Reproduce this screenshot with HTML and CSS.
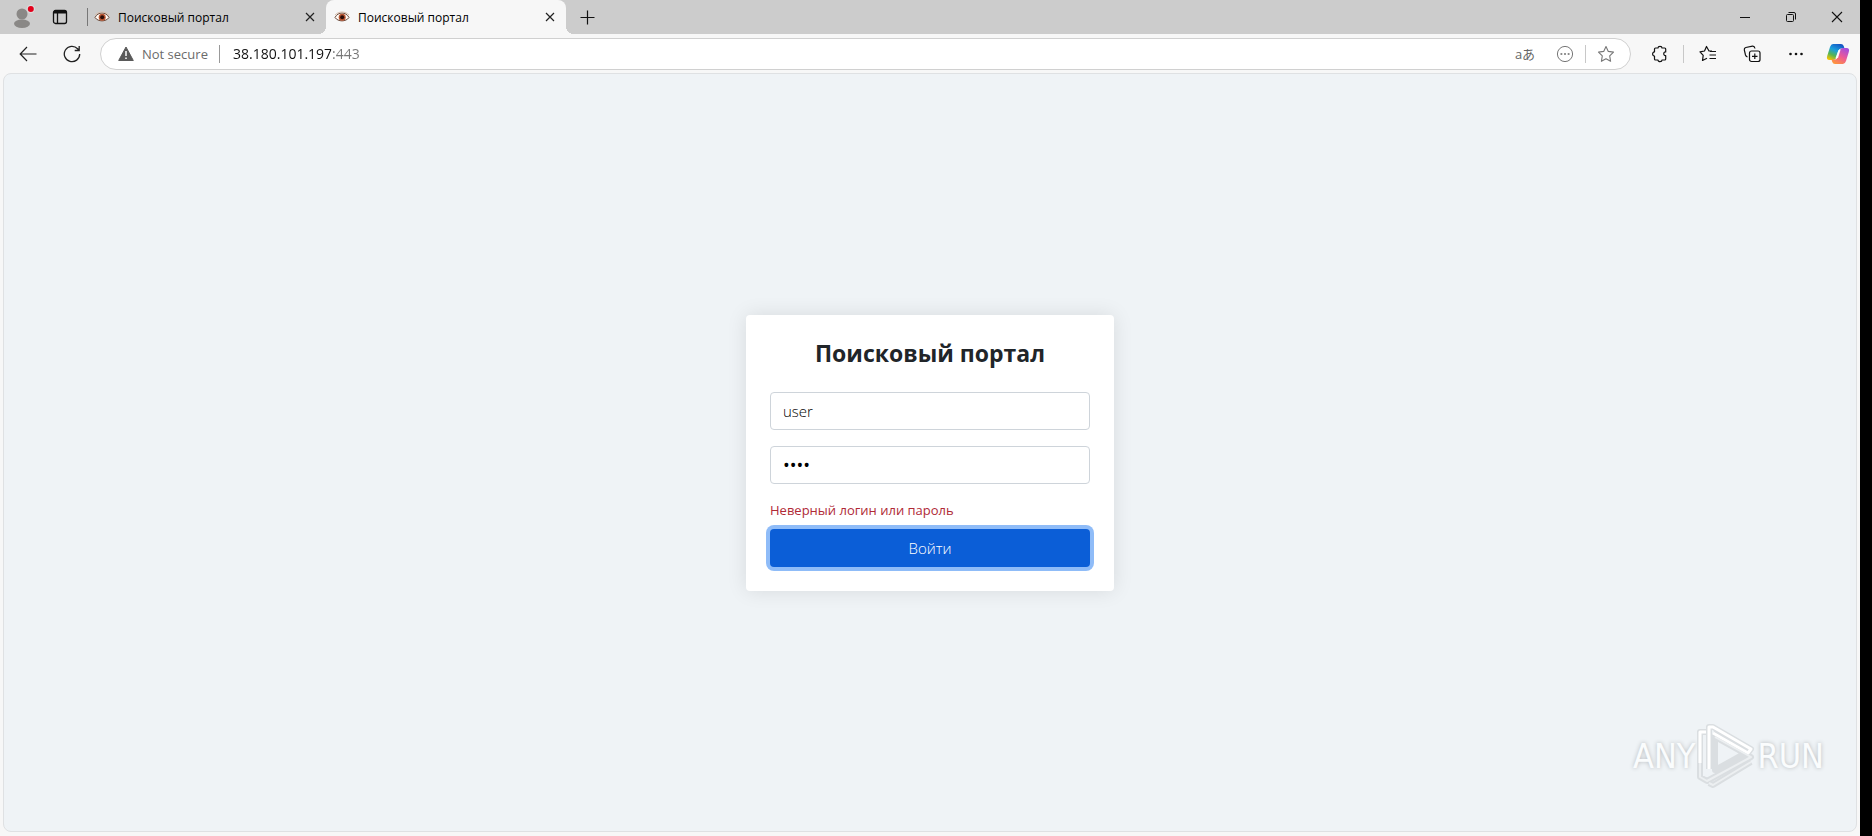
FILE: index.html
```html
<!DOCTYPE html>
<html lang="ru">
<head>
  <meta charset="UTF-8">
  <meta name="viewport" content="width=device-width, initial-scale=1">
  <title>Поисковый портал</title>
  <link rel="stylesheet" href="styles.css">
</head>
<body>

  <!-- shared icons -->
  <svg class="sprite" aria-hidden="true">
    <symbol id="eye" viewBox="0 0 16 16">
      <path d="M1 8.500C4 2.500 12 2.500 15 8.500C12 13 4 13 1 8.500Z" fill="#fffaf5" stroke="#6b4a3a"/>
      <path d="M1 6C4.500 2 11.500 2 15 6" fill="none" stroke="#d8bfae"/>
      <circle cx="8.200" cy="8.200" r="3.500" fill="#b8532f"/>
      <circle cx="8.200" cy="8.200" r="2" fill="#2a0d08"/>
    </symbol>
    <symbol id="cross" viewBox="0 0 16 16">
      <path d="M4 4L12 12M12 4L4 12" fill="none" stroke="#222" stroke-width="1.2"/>
    </symbol>
    <symbol id="star" viewBox="0 0 18 18">
      <path d="M9 1.500L11.300 6.400L16.500 7.100L12.700 10.900L13.600 16.300L9 13.700L4.400 16.300L5.300 10.900L1.500 7.100L6.700 6.400Z" fill="none" stroke="#777" stroke-width="1.1" stroke-linejoin="round"/>
    </symbol>
  </svg>

  <div class="browser">

    <!-- tab strip -->
    <header class="titlebar">
      <button class="profile" aria-label="Profile">
        <svg width="28" height="30" viewBox="0 0 28 30">
          <circle cx="14" cy="12" r="5.500" fill="#8a8886"/>
          <ellipse cx="14" cy="21.800" rx="8" ry="4.200" fill="#8a8886"/>
          <circle cx="22.800" cy="7" r="4.200" fill="#dcdcdc"/>
          <circle cx="22.800" cy="7" r="3" fill="#e3001b"/>
        </svg>
      </button>
      <button class="workspace" aria-label="Tab actions">
        <svg width="16" height="16" viewBox="0 0 16 16" fill="none" stroke="#111" stroke-width="1.3">
          <rect x="1.500" y="1.500" width="13" height="13" rx="2"/>
          <path d="M1.500 3.300H14.500M5.500 4V14.500" />
          <path d="M2 3H14" stroke-width="3"/>
        </svg>
      </button>
      <span class="divider tab-divider"></span>
      <div class="tab">
        <svg class="favicon"><use href="#eye"/></svg>
        <span class="tab-title">Поисковый портал</span>
        <button class="tab-close" aria-label="Close tab"><svg width="16" height="16"><use href="#cross"/></svg></button>
      </div>
      <div class="tab active">
        <svg class="favicon"><use href="#eye"/></svg>
        <span class="tab-title">Поисковый портал</span>
        <button class="tab-close" aria-label="Close tab"><svg width="16" height="16"><use href="#cross"/></svg></button>
      </div>
      <button class="new-tab" aria-label="New tab">
        <svg width="16" height="16" viewBox="0 0 16 16"><path d="M8.500 1.500V15.500M1.500 8.500H15.500" stroke="#111" stroke-width="1.2"/></svg>
      </button>
      <div class="window-buttons">
        <button aria-label="Minimize"><svg width="12" height="12" viewBox="0 0 12 12"><path d="M1 6.500H11" stroke="#111"/></svg></button>
        <button aria-label="Restore">
          <svg width="12" height="12" viewBox="0 0 12 12" fill="none" stroke="#111">
            <rect x="1.500" y="3.500" width="7" height="7" rx="1"/>
            <path d="M3.500 1.500H9Q10.500 1.500 10.500 3V8.500"/>
          </svg>
        </button>
        <button aria-label="Close window"><svg width="12" height="12" viewBox="0 0 12 12"><path d="M1 1L11 11M11 1L1 11" stroke="#111" stroke-width="1.1"/></svg></button>
      </div>
    </header>

    <!-- address bar -->
    <nav class="toolbar">
      <button class="tool" aria-label="Back">
        <svg width="18" height="18" viewBox="0 0 18 18" fill="none" stroke="#222" stroke-width="1.2"><path d="M17.500 9H1.500M8 2L1.200 9L8 16"/></svg>
      </button>
      <button class="tool" aria-label="Refresh">
        <svg width="18" height="18" viewBox="0 0 18 18" fill="none" stroke="#222" stroke-width="1.3"><path d="M16.700 9A7.700 7.700 0 1 1 14.600 3.700L16 5.300M16.200 1V5.500H11.700"/></svg>
      </button>
      <div class="omnibox">
        <svg width="16" height="16" viewBox="0 0 16 16">
          <path d="M8 1L15.300 14.500H0.700Z" fill="#5a5a5a" stroke="#5a5a5a" stroke-linejoin="round"/>
          <path d="M8 5V10M8 11.500V13" stroke="#fff" stroke-width="1.500"/>
        </svg>
        <label class="security" for="url">Not secure</label>
        <span class="divider url-divider"></span>
        <input id="url" class="url" type="text" value="38.180.101.197:443" spellcheck="false">
        <button class="omni-btn translate" aria-label="Translate">aあ</button>
        <button class="omni-btn" aria-label="More">
          <svg width="18" height="18" viewBox="0 0 18 18"><circle cx="9" cy="9" r="7.600" fill="none" stroke="#777"/><path d="M4.500 9H6.300M8.100 9H9.900M11.700 9H13.500" stroke="#666" stroke-width="1.600"/></svg>
        </button>
        <span class="divider"></span>
        <button class="omni-btn" aria-label="Add to favorites"><svg width="18" height="18"><use href="#star"/></svg></button>
      </div>
      <button class="tool" aria-label="Extensions">
        <svg width="18" height="18" viewBox="0 0 18 18" fill="none" stroke="#111" stroke-width="1.200" stroke-linejoin="round">
          <path d="M4.500 3H7C7 .8 11 .8 11 3H13.700Q14.700 3 14.700 4V7C12.100 6.500 12.100 11 14.700 10.500V14Q14.700 15 13.700 15H11C11 17.200 7 17.200 7 15H4.500Q3.500 15 3.500 14V11C1 11.400 1 6.600 3.500 7V4Q3.500 3 4.500 3Z"/>
        </svg>
      </button>
      <span class="divider tool-divider"></span>
      <button class="tool" aria-label="Favorites">
        <svg width="18" height="18" viewBox="0 0 18 18" fill="none" stroke="#111" stroke-width="1.200" stroke-linejoin="round">
          <path d="M13 6H10L7.500 1.500L5.500 6L1 6.800L4.200 10.300L3.500 15.500L8 13.200M11 6.500H17M10.500 10H17M10.500 13.500H17"/>
        </svg>
      </button>
      <button class="tool" aria-label="Collections">
        <svg width="18" height="18" viewBox="0 0 18 18" fill="none" stroke="#111" stroke-width="1.200">
          <rect x="6.500" y="6" width="10.500" height="10.500" rx="2"/>
          <path d="M11.800 8.500V14M9 11.300H14.500M4.500 12Q3 11.500 2.500 10L1.300 5Q1 3 2.800 2.500L9.500 1.200Q11.500 1 12 3.500"/>
        </svg>
      </button>
      <button class="tool" aria-label="Settings and more">
        <svg width="18" height="18" viewBox="0 0 18 18" fill="#111"><circle cx="3.500" cy="9" r="1.300"/><circle cx="9" cy="9" r="1.300"/><circle cx="14.500" cy="9" r="1.300"/></svg>
      </button>
      <button class="tool copilot" aria-label="Copilot">
        <svg width="24" height="22" viewBox="0 0 24 22">
          <defs>
            <linearGradient id="cool" x1="0.700" y1="0" x2="0.200" y2="1"><stop offset="0" stop-color="#1556c5"/><stop offset=".4" stop-color="#1aa0dc"/><stop offset=".7" stop-color="#57b554"/><stop offset="1" stop-color="#f5c400"/></linearGradient>
            <linearGradient id="warm" x1="0.800" y1="0" x2="0.200" y2="1"><stop offset="0" stop-color="#a14de0"/><stop offset=".5" stop-color="#ee5a95"/><stop offset="1" stop-color="#ff9838"/></linearGradient>
          </defs>
          <path d="M7 1H15Q17 1 17.700 3L18.500 5.500H15Q13 5.500 12.200 8L10 15Q9.300 17 7 17H3.500Q0 17 1.200 13L4 4Q5 1 7 1Z" fill="url(#cool)"/>
          <path d="M17 21H9Q7 21 6.300 19L5.500 16.500H9Q11 16.500 11.800 14L14 7Q14.700 5 17 5H20.500Q24 5 22.800 9L20 18Q19 21 17 21Z" fill="url(#warm)"/>
          <path d="M12.500 7H14.500L12 15H9.500Z" fill="#fff" opacity=".85"/>
        </svg>
      </button>
    </nav>

    <!-- page content -->
    <main class="page">
      <form class="login-card" onsubmit="return false">
        <h1>Поисковый портал</h1>
        <input class="form-control" type="text" value="user" aria-label="Логин">
        <input class="form-control" type="password" value="user" aria-label="Пароль">
        <div class="error">Неверный логин или пароль</div>
        <button class="btn-primary" type="submit">Войти</button>
      </form>

      <div class="watermark">
        <span>ANY</span>
        <svg width="60" height="66" viewBox="0 0 60 66" fill="none" stroke-linejoin="round">
          <g stroke="#dadee1" stroke-width="6">
            <path d="M13 46V4H17L55 26L52 30L17 10"/>
            <path d="M10 9H4V54L11 58L55 34L19 14V47L48 31"/>
            <path d="M13 60L17 62L55 39"/>
          </g>
          <g stroke="#ffffff" stroke-width="3">
            <path d="M13 46V4H17L55 26L52 30L17 10"/>
            <path d="M10 9H4V40"/>
          </g>
          <g stroke="#eceff1" stroke-width="2">
            <path d="M4 40V54L11 58L55 34L19 14"/>
            <path d="M13 60L17 62L55 39"/>
          </g>
        </svg>
        <span>RUN</span>
      </div>
    </main>
  </div>

</body>
</html>
```
FILE: styles.css
```css
* { box-sizing: border-box; }

body {
  margin: 0;
  min-height: 100vh;
  padding-right: 12px;
  background: #000;
  font-family: "Open Sans", "Noto Sans", sans-serif;
  color: #212529;
}

.sprite { display: none; }

button {
  display: flex;
  align-items: center;
  justify-content: center;
  padding: 0;
  border: 0;
  background: none;
  font-family: inherit;
}

.browser {
  display: flex;
  flex-direction: column;
  min-height: 100vh;
  background: #f7f7f7;
}

.divider { width: 1px; height: 18px; background: #c8c8c8; }

/* tab strip */
.titlebar { display: flex; height: 34px; background: #cccccc; }
.profile { width: 44px; }
.workspace { width: 32px; }
.tab-divider { margin: 8px -2px 0 11px; background: #777; }

.tab {
  display: flex;
  align-items: center;
  gap: 8px;
  flex: 0 1 240px;
  padding: 0 8px;
  font-size: 12px;
  color: #000;
}
.tab.active { position: relative; background: #f7f7f7; border-radius: 8px 8px 0 0; }
.tab.active::before,
.tab.active::after {
  content: "";
  position: absolute;
  bottom: 0;
  width: 8px;
  height: 8px;
}
.tab.active::before { left: -8px; background: radial-gradient(circle at 0 0, #cccccc 8px, #f7f7f7 8px); }
.tab.active::after { right: -8px; background: radial-gradient(circle at 100% 0, #cccccc 8px, #f7f7f7 8px); }
.tab-title { flex: 1; white-space: nowrap; }
.favicon { width: 16px; height: 16px; }
.new-tab { width: 42px; }
.window-buttons { display: flex; margin-left: auto; }
.window-buttons button { width: 46px; }

/* address bar */
.toolbar { display: flex; align-items: center; height: 39px; padding: 0 2px 0 6px; }
.tool { width: 44px; height: 32px; }
.copilot { width: 40px; }
.tool-divider { margin: 0 2px 0 1px; }

.omnibox {
  display: flex;
  align-items: center;
  flex: 1;
  height: 32px;
  margin: 0 7px 0 6px;
  padding: 0 10px 0 17px;
  background: #fff;
  border: 1px solid #d0d0d0;
  border-radius: 16px;
  font-size: 14px;
}
.security { width: 77px; margin-left: 8px; font-size: 13px; color: #6b6b6b; white-space: nowrap; }
.url-divider { background: #999; }
.url {
  flex: 1;
  min-width: 0;
  margin-left: 13px;
  padding: 0;
  border: 0;
  outline: 0;
  font: 14px "Open Sans", "Noto Sans", sans-serif;
  /* host is dark, port is dimmed */
  color: transparent;
  background: linear-gradient(90deg, #111 98px, #777 98px);
  background-clip: text;
  -webkit-background-clip: text;
}
.omni-btn { width: 40px; height: 28px; }
.omni-btn:last-child { width: 28px; margin-left: 6px; }
.translate { font-family: "Open Sans", "Noto Sans CJK JP", sans-serif; font-size: 13px; color: #666; }

/* login page */
.page {
  position: relative;
  display: flex;
  align-items: center;
  justify-content: center;
  flex: 1;
  margin: 0 3px 4px;
  background: #eff3f6;
  border: 1px solid #dfe1e3;
  border-radius: 8px;
}

.login-card {
  width: 368px;
  padding: 24px;
  background: #fff;
  border-radius: 4px;
  box-shadow: 0 0 20px rgba(0, 0, 0, 0.1);
}
.login-card h1 { margin: 0 0 24px; font-size: 23px; line-height: 29px; font-weight: 700; text-align: center; }

.form-control {
  display: block;
  width: 100%;
  height: 38px;
  margin-bottom: 16px;
  padding: 6px 12px;
  border: 1px solid #ced4da;
  border-radius: 4px;
  background: #fff;
  color: #000;
  font-family: inherit;
  font-size: 15px;
  font-weight: 300;
}
.form-control[type="password"] { font-size: 18px; font-weight: 400; }

.error { margin-bottom: 8px; font-size: 13px; line-height: 21px; color: #b02a37; }

.btn-primary {
  width: 100%;
  height: 38px;
  border-radius: 4px;
  background: #0b5ed7;
  box-shadow: 0 0 0 4px #8fbcf8;
  color: #fff;
  font-size: 15px;
  font-weight: 300;
}

/* corner logo over the page */
.watermark {
  position: absolute;
  right: 32px;
  bottom: 42px;
  display: flex;
  align-items: center;
  gap: 1px;
  font-family: "DejaVu Sans Condensed", "DejaVu Sans", sans-serif;
  font-size: 34px;
  line-height: 1;
  color: #fafcfd;
  text-shadow: 0 0 4px #b4b8bb;
}
```
